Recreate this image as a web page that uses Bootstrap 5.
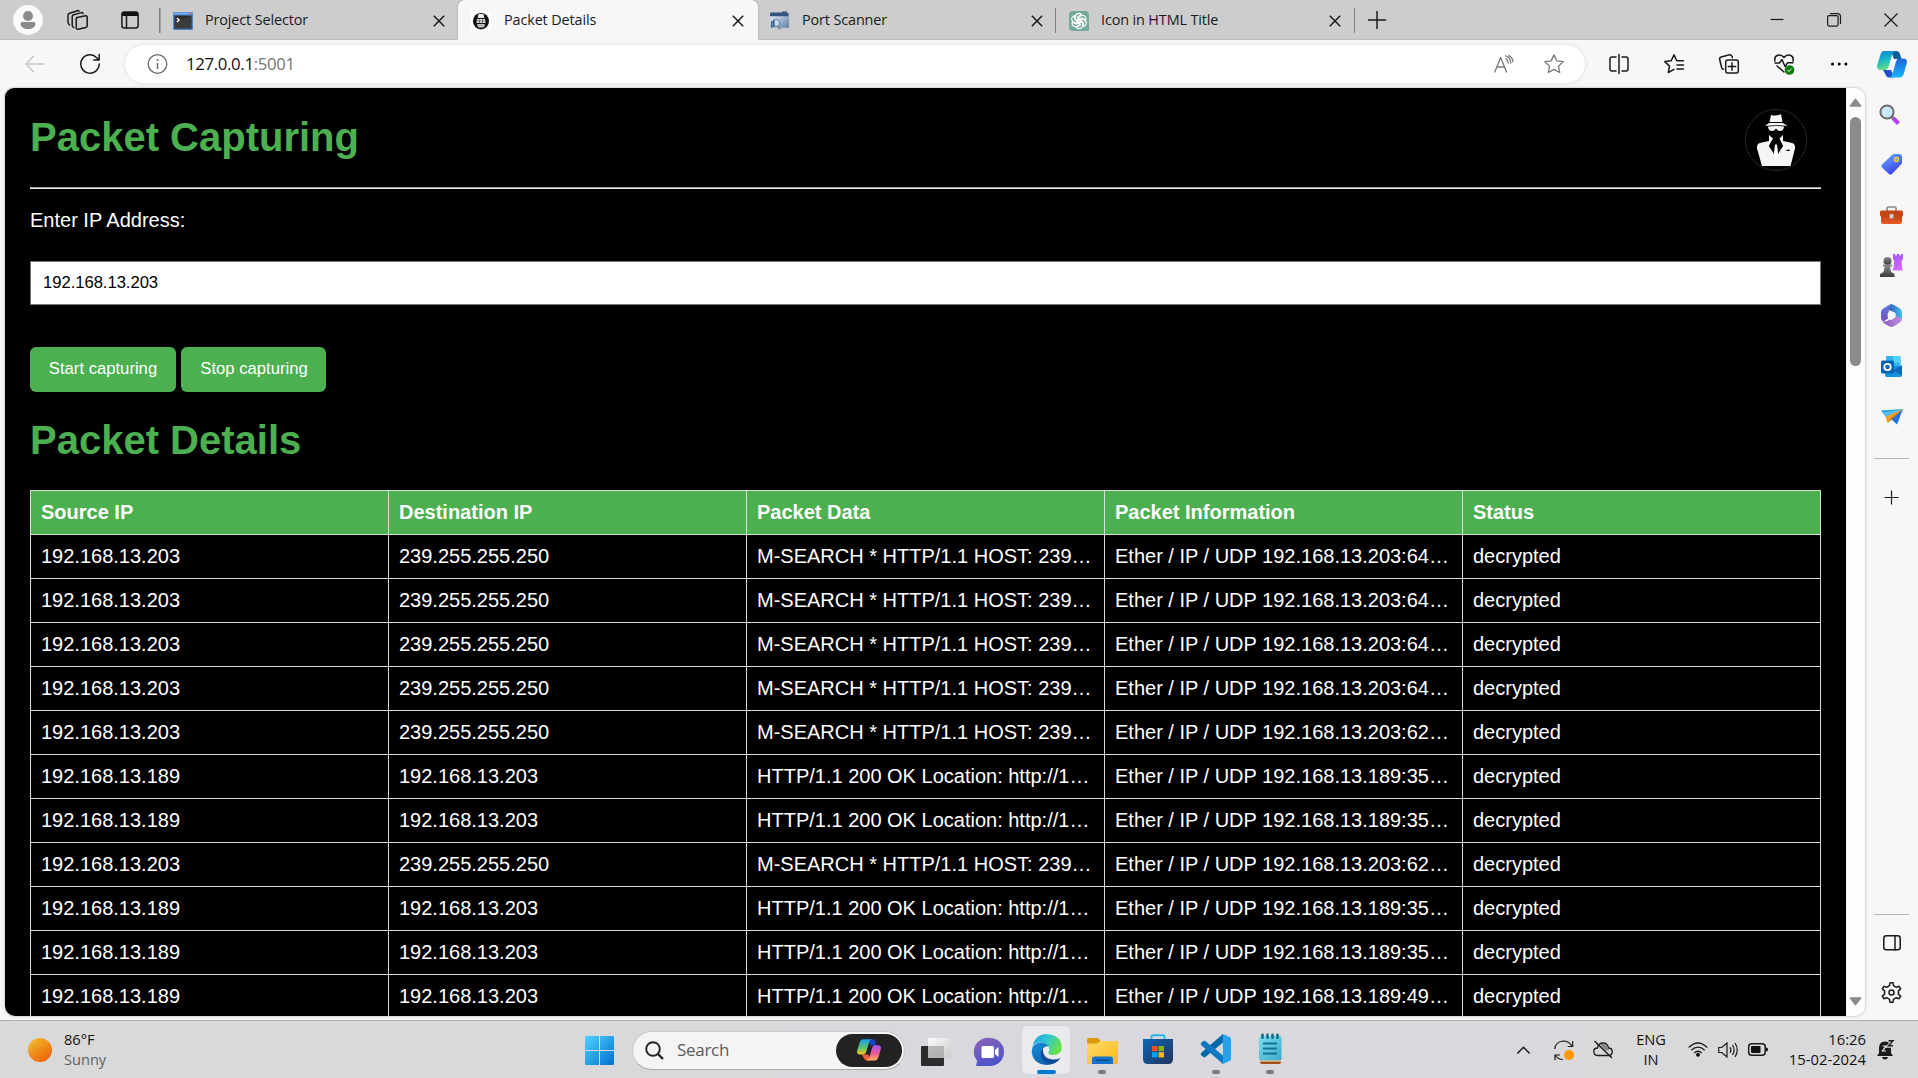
<!DOCTYPE html>
<html lang="en">
<head>
<meta charset="utf-8">
<title>Packet Details</title>
<link rel="stylesheet" href="https://cdn.jsdelivr.net/npm/bootstrap@5.3.0/dist/css/bootstrap.min.css">
<style>
  html, body { height: 100%; }
  body { width: 1918px; height: 1078px; overflow: hidden; background: #f7f7f7; font-family: "Open Sans", "Noto Sans", sans-serif; color: #111; line-height: 1.2; }
  svg { display: block; flex: none; overflow: visible; }
  .ln { fill: none; stroke: #1b1b1b; stroke-width: 1.5; stroke-linecap: round; stroke-linejoin: round; }
  .ln-thin { fill: none; stroke: #1b1b1b; stroke-width: 1.2; }
  .ln-grey { fill: none; stroke: #777; stroke-width: 1.3; stroke-linejoin: round; stroke-linecap: round; }

  /* tab strip */
  .tabstrip { height: 40px; background: #cdcdcd; box-shadow: inset 0 -1px 0 #bdbdbd; }
  .strip-tools { width: 159px; padding-left: 13px; }
  .strip-tools .tool-ws { margin-left: 24px; }
  .strip-tools .tool-ta { margin-left: 33px; }
  .avatar { width: 30px; height: 30px; background: #fafafa; }
  .tab-item { height: 40px; padding: 1px 14px 0 14px; font-size: 14.4px; letter-spacing: -.12px; color: #1a1a1a; }
  .tab-item .tab-name { margin-left: 12px; padding-bottom: 1px; }
  .w-first { width: 299px; } .w-active { width: 300px; } .w-third { width: 298px; } .w-last { width: 299px; }
  .tab-sep-left { background: linear-gradient(#808080, #808080) 0 8px / 1.5px 25px no-repeat; padding-right: 13px; }
  .tab-sep-right { background: linear-gradient(#808080, #808080) 100% 8px / 1.5px 25px no-repeat; }
  .tab-active { background: #f7f7f7; border-radius: 7px 7px 0 0; padding-left: 13px; box-shadow: 0 0 2px #999; clip-path: inset(0 -3px 0 -3px); }
  .tab-active .tab-name { margin-left: 13px; }
  .tab-third { padding-left: 12px; padding-right: 13px; }
  .tab-last { padding-left: 13px; }
  .tab-plus { margin-left: 13px; }
  .win-controls { padding-right: 20px; gap: 43px; }

  /* address bar */
  .toolbar-row { height: 48px; padding-left: 25px; }
  .icon-reload { margin-left: 35px; }
  .addr-pill { width: 1460px; height: 38px; margin-left: 24px; margin-bottom: 1px; background: #fff; border-radius: 19px; padding: 0 21px 0 22px; box-shadow: 0 0 4px rgba(0,0,0,.12); font-size: 16.8px; letter-spacing: -.35px; }
  .addr-url { margin-left: 18px; padding-top: 1px; }
  .addr-port { color: #757575; }
  .addr-star { margin-left: 30px; }
  .bar-slot { width: 55.2px; }
  .bar-slots { margin-left: 6px; }
  .bar-copilot { margin-left: 10.500px; }

  /* viewport frame */
  .main-row { height: 932px; padding-left: 5px; }
  .page-frame { width: 1860px; height: 928px; border-radius: 9px 10px 10px 10px; overflow: hidden; background: #fdfdfd; box-shadow: 0 0 3px rgba(0,0,0,.3); }
  .page-body { width: 1841px; height: 928px; flex: none; background: #000; color: #fff; overflow: hidden; padding: 0 25px; font-family: "Liberation Sans", Arial, sans-serif; font-size: 20px; line-height: 23px; }
  .page-head { height: 99px; padding: 21px 14px 0 0; }
  .page-title { font-size: 40px; line-height: 46px; font-weight: 700; color: #4caf50; margin: 0; }
  .page-head .page-title { padding-top: 5px; }
  .page-rule { height: 2px; background: linear-gradient(#9c9c9c 50%, #f1f1f1 50%); }
  .ip-label { margin-top: 20px; height: 23px; }
  .form-control.ip-field { margin-top: 29px; height: 44px; border: 1px solid #767676; border-radius: 0; padding: 0 12px 1px; font-size: 16.67px; letter-spacing: -.05px; color: #000; background: #fff; }
  .btn-capture { height: 45px; border-radius: 6px; background: #4caf50; color: #fff; font-size: 16.67px; line-height: 19px; padding: 0 0 2px; width: 146px; border: 0; }
  .btn-stop { width: 145px; padding-left: 1px; }
  .btn-line { margin-top: 42px; gap: 5px; }
  .details-title { margin-top: 25px; }
  .table.packets { width: 1791px; margin: 27px 0 0; table-layout: fixed; border-collapse: collapse; color: #fff; --bs-table-color: #fff; --bs-table-bg: #000; border-color: #ddd; }
  .table.packets th, .table.packets td { height: 44px; padding: 0 10px 1px; border: 1px solid #ddd; white-space: nowrap; overflow: hidden; vertical-align: middle; line-height: 23px; color: #fff; background: #000; }
  .table.packets th { background: #4caf50; }
  .scroll-col { width: 19px; padding: 10px 0; }
  .scroll-thumb { width: 11px; height: 249px; border-radius: 6px; background: #8b8b8b; margin-top: 10px; }

  /* sidebar */
  .side-rail { width: 53px; height: 932px; padding-top: 1.500px; }
  .rail-slot { height: 50.3px; width: 53px; flex: none; }
  .rail-line { width: 35px; height: 1px; background: #b5b5b5; flex: none; }
  .rail-end { margin-top: auto; }
  .rail-panel { margin-top: 2.500px; }
  .rail-gear { margin-bottom: 2px; }
  .rail-plus { margin-top: 31px; }

  /* taskbar */
  .taskbar { height: 58px; background: linear-gradient(90deg, #dad9d9, #d9d9da 25%, #d9d8de 60%, #d9d9da); border-top: 1px solid #adadad; font-size: 14.6px; line-height: 20px; padding-left: 28px; }
  .weather { width: 557px; gap: 12px; }
  .weather-text { padding-bottom: 2px; }
  .weather-state { color: #606060; }
  .search-pill { width: 273px; height: 39px; margin-left: 18px; margin-top: 1px; border-radius: 20px; background: #f4f4f5; border: 1px solid #c9c9cb; border-bottom-color: #aaa; padding: 0 2px 0 12px; font-size: 17px; letter-spacing: -.3px; color: #5c5c5c; }
  .search-word { margin-left: 13px; }
  .copilot-pill { width: 66px; height: 33px; border-radius: 17px; background: #222; }
  .start-logo { margin-top: 1px; }
  .task-slots { margin-left: 3px; }
  .task-slot { width: 56px; height: 57px; padding-top: 5px; }
  .task-tile { width: 48px; height: 48px; border-radius: 5px; background: #ebebee; box-shadow: 0 0 1px #bbb; }
  .task-mark { width: 8px; height: 4px; border-radius: 2px; background: #7b7b7d; }
  .task-mark-on { width: 19px; background: #0078d4; }
  .tray { padding-right: 24px; }
  .tray-sync { margin-left: 24px; } .tray-cloud { margin-left: 19px; }
  .tray-lang { width: 34px; margin-left: 21px; padding-bottom: 2px; } .tray-wifi { margin-left: 20px; }
  .tray-vol { margin-left: 10px; } .tray-batt { margin-left: 10px; }
  .tray-clock { width: 98px; padding-bottom: 2px; font-size: 14.8px; } .tray-bell { margin-left: 11px; }
</style>
<script src="https://cdn.jsdelivr.net/npm/bootstrap@5.3.0/dist/js/bootstrap.bundle.min.js"></script>
</head>
<body>
<svg width="0" height="0" class="position-absolute">
  <defs>
    <linearGradient id="gSun" x1="0" y1="0" x2=".7" y2="1"><stop offset="0" stop-color="#f0c52f"/><stop offset="1" stop-color="#ef6209"/></linearGradient>
    <linearGradient id="gWin" x1="0" y1="0" x2="1" y2="1"><stop offset="0" stop-color="#4fd3ff"/><stop offset="1" stop-color="#0070d0"/></linearGradient>
    <linearGradient id="gCpA" x1="0" y1="0" x2=".3" y2="1"><stop offset="0" stop-color="#0a7ad0"/><stop offset=".5" stop-color="#16b5c8"/><stop offset="1" stop-color="#5fe08a"/></linearGradient>
    <linearGradient id="gCpB" x1="0" y1="0" x2="0" y2="1"><stop offset="0" stop-color="#1f62d6"/><stop offset="1" stop-color="#16b7ff"/></linearGradient>
    <linearGradient id="gCpC" x1="0" y1="0" x2="0" y2="1"><stop offset="0" stop-color="#15a0f0"/><stop offset=".6" stop-color="#62c56a"/><stop offset="1" stop-color="#f5c518"/></linearGradient>
    <linearGradient id="gCpD" x1="0" y1="0" x2="0" y2="1"><stop offset="0" stop-color="#a353ee"/><stop offset=".55" stop-color="#f0569a"/><stop offset="1" stop-color="#ffb15a"/></linearGradient>
    <linearGradient id="gTag" x1="0" y1="0" x2=".5" y2="1"><stop offset="0" stop-color="#67b4ff"/><stop offset="1" stop-color="#3b41f0"/></linearGradient>
    <linearGradient id="gChat" x1="0" y1="0" x2=".4" y2="1"><stop offset="0" stop-color="#8e62b8"/><stop offset="1" stop-color="#4f55c9"/></linearGradient>
    <linearGradient id="gEdgeT" x1="0" y1="0" x2="1" y2=".4"><stop offset="0" stop-color="#1a9fe0"/><stop offset=".5" stop-color="#2fc6d6"/><stop offset="1" stop-color="#66e04b"/></linearGradient>
    <linearGradient id="gEdgeB" x1="0" y1="0" x2="1" y2="1"><stop offset="0" stop-color="#1b8fdc"/><stop offset="1" stop-color="#0b4fa0"/></linearGradient>
    <linearGradient id="gFold" x1="0" y1="0" x2="1" y2="1"><stop offset="0" stop-color="#ffda66"/><stop offset="1" stop-color="#fbb91e"/></linearGradient>
    <linearGradient id="gStore" x1="0" y1="0" x2="1" y2="1"><stop offset="0" stop-color="#0c66b5"/><stop offset="1" stop-color="#24335f"/></linearGradient>
    <linearGradient id="gNote" x1="0" y1="0" x2="1" y2="1"><stop offset="0" stop-color="#79def2"/><stop offset="1" stop-color="#3aaac8"/></linearGradient>
    <linearGradient id="gTv" x1="0" y1="0" x2="1" y2="1"><stop offset="0" stop-color="#fff"/><stop offset="1" stop-color="#c9c9cb"/></linearGradient>
    <linearGradient id="gScan" x1="0" y1="0" x2="1" y2="1"><stop offset="0" stop-color="#eef3f9"/><stop offset="1" stop-color="#5e7ea6"/></linearGradient>
    <linearGradient id="gM1" x1="0" y1="0" x2="1" y2="0"><stop offset="0" stop-color="#2f55b5"/><stop offset="1" stop-color="#46c2ee"/></linearGradient>
    <linearGradient id="gM2" x1="0" y1="0" x2="0" y2="1"><stop offset="0" stop-color="#5a7fe0"/><stop offset="1" stop-color="#7a4fb8"/></linearGradient>
    <linearGradient id="gM3" x1="0" y1="0" x2="1" y2="0"><stop offset="0" stop-color="#8c58bd"/><stop offset="1" stop-color="#c08fe0"/></linearGradient>
    <linearGradient id="gPawn" x1="0" y1="0" x2="0" y2="1"><stop offset="0" stop-color="#8a8a8a"/><stop offset="1" stop-color="#3d3d3d"/></linearGradient>
    <linearGradient id="gRook" x1="0" y1="0" x2="0" y2="1"><stop offset="0" stop-color="#a855f7"/><stop offset="1" stop-color="#d36bff"/></linearGradient>
    <linearGradient id="gTool" x1="0" y1="0" x2="0" y2="1"><stop offset="0" stop-color="#b53f14"/><stop offset="1" stop-color="#ee5a24"/></linearGradient>
    <symbol id="xmark" viewBox="0 0 12 12"><path d="M.8.8 11.2 11.2M11.2.8.8 11.2" fill="none" stroke="#1a1a1a" stroke-width="1.5"/></symbol>
  </defs>
</svg>

<header class="tabstrip d-flex align-items-center">
  <div class="strip-tools d-flex align-items-center">
    <div class="avatar rounded-circle d-flex align-items-center justify-content-center">
      <svg width="16" height="18" viewBox="0 0 16 18"><circle cx="8" cy="5" r="5" fill="#8b8b8b"/><path d="M2.5 11h11c1.600 0 2 1 2 2 0 3-3.500 5-7.500 5S.5 16 .5 13c0-1 .4-2 2-2z" fill="#8b8b8b"/></svg>
    </div>
    <svg class="tool-ws" width="21" height="20" viewBox="0 0 21 20"><g class="ln"><path d="m10 7.500 8.500-1.700q1.700-.2 1.700 1.500v8.500q0 1.300-1.300 1.600L11 19.300q-1.800.2-1.800-1.500V9q0-1.200.8-1.500z"/><path d="M16 3.500q-.4-1.200-1.600-.9L6.600 4.800Q5.200 5.300 5.200 6.700v8.500q0 1.700 1.500 2.300"/><path d="M12 1.200q-.5-.8-1.600-.5L2.600 3.200Q1 3.800 1 5.400v6.400q0 2 1.500 3"/></g></svg>
    <svg class="tool-ta" width="18" height="18" viewBox="0 0 18 18"><rect x=".9" y=".9" width="16.200" height="16.200" rx="2.500" class="ln"/><path d="M1 2.500Q1 1 3 1h12q2 0 2 1.500V5H1z" fill="#111"/><path d="M5.500 5v12" class="ln"/></svg>
  </div>
  <div class="tab-item tab-sep-left w-first d-flex align-items-center">
    <svg width="20" height="18" viewBox="0 0 20 18"><rect width="20" height="18" rx="1" fill="#4c83cd"/><rect x=".5" y=".5" width="19" height="2" fill="#79aaf0"/><rect x="16" y="1" width="2.500" height="1.300" fill="#e05848"/><rect x="1.500" y="3.500" width="17" height="13" fill="#2c2c2e"/><path d="M1.500 16.500v-9q9 0 17-4v13z" fill="#414143" opacity=".7"/><path d="m4 6 2 2-2 2" stroke="#fff" stroke-width="1.400" fill="none"/></svg>
    <span class="tab-name">Project Selector</span><svg class="ms-auto" width="12" height="12"><use href="#xmark"/></svg>
  </div>
  <div class="tab-item tab-active w-active d-flex align-items-center">
    <svg width="20" height="20" viewBox="0 0 20 20"><rect width="20" height="20" fill="#fff"/><ellipse cx="10" cy="10.200" rx="8" ry="8.300" fill="#111"/><path d="M7.500 3h5l.8 4H6.700z" fill="#eee"/><path d="M6 8h8l.6 4H5.400z" fill="#ddd"/><path d="M6 10h8M8.500 8v4M11.500 8v4" stroke="#555" stroke-width=".7"/><path d="M6 13h8l-1 3.500H7z" fill="#bbb"/></svg>
    <span class="tab-name">Packet Details</span><svg class="ms-auto" width="12" height="12"><use href="#xmark"/></svg>
  </div>
  <div class="tab-item tab-third tab-sep-right w-third d-flex align-items-center">
    <svg width="20" height="19" viewBox="0 0 21 19"><rect x="0" y="2" width="20" height="15" rx="1" fill="url(#gScan)"/><path d="M0 2.500Q0 1 1.500 1H12l1-1h5v2h1.500v3H0z" fill="#34557d"/><circle cx="6.500" cy="12" r="3.600" fill="#c5dcf3" stroke="#5e7ea6"/><path d="m8.500 15 2 4" stroke="#7d8da0" stroke-width="2"/><path d="M2 10v7M4 9v7" stroke="#345a88" stroke-width="1.500"/></svg>
    <span class="tab-name">Port Scanner</span><svg class="ms-auto" width="12" height="12"><use href="#xmark"/></svg>
  </div>
  <div class="tab-item tab-last tab-sep-right w-last d-flex align-items-center">
    <svg width="20" height="20" viewBox="0 0 20 20"><path d="M4 0h12q4 0 4 4v16H4q-4 0-4-4V4q0-4 4-4z" fill="#74aa9c"/><g fill="none" stroke="#fff" stroke-width="1" stroke-linejoin="round" transform="translate(-.9 -.9) scale(1.090)"><path id="knot" d="M10 7.700 6.800 9.500V5.800Q7 3 9.800 3q1.400 0 2.500 1L9 6v5.500"/><use href="#knot" transform="rotate(60 10 10)"/><use href="#knot" transform="rotate(120 10 10)"/><use href="#knot" transform="rotate(180 10 10)"/><use href="#knot" transform="rotate(240 10 10)"/><use href="#knot" transform="rotate(300 10 10)"/></g></svg>
    <span class="tab-name">Icon in HTML Title</span><svg class="ms-auto" width="12" height="12"><use href="#xmark"/></svg>
  </div>
  <svg class="tab-plus" width="18" height="18" viewBox="0 0 18 18"><path d="M9 .5v17M.5 9h17" class="ln"/></svg>
  <div class="win-controls ms-auto d-flex align-items-center">
    <svg width="14" height="14" viewBox="0 0 14 14"><path d="M.5 6.500h13" class="ln-thin"/></svg>
    <svg width="14" height="14" viewBox="0 0 14 14"><rect x=".6" y="2.600" width="10.500" height="10.500" rx="1.500" class="ln-thin"/><path d="M3 .7h7.500q3 0 3 3V11" class="ln-thin"/></svg>
    <svg width="14" height="14" viewBox="0 0 14 14"><path d="M.5.5l13 13M13.500.5.5 13.500" class="ln-thin"/></svg>
  </div>
</header>

<nav class="toolbar-row d-flex align-items-center">
  <svg width="20" height="18" viewBox="0 0 20 18"><path d="M9 .8.9 9 9 17.200M1 9h18.500" fill="none" stroke="#c6c6c6" stroke-width="1.400"/></svg>
  <svg class="icon-reload" width="21" height="20" viewBox="0 0 21 20"><path d="M19.200 10a9.200 9.200 0 1 1-2.500-6.300L19 6M19.200.6V6h-5.500" class="ln"/></svg>
  <div class="addr-pill d-flex align-items-center">
    <svg width="21" height="20" viewBox="0 0 21 20"><circle cx="10.500" cy="10" r="9.300" fill="none" stroke="#6a6a6a" stroke-width="1.300"/><path d="M10.500 9v6" stroke="#6a6a6a" stroke-width="1.500"/><circle cx="10.500" cy="6" r="1" fill="#6a6a6a"/></svg>
    <div class="addr-url">127.0.0.1<span class="addr-port">:5001</span></div>
    <svg class="ms-auto" width="20" height="18" viewBox="0 0 20 18"><path d="M.8 17 6.700 2.500 12.500 17M3 12h7.500M12 3.500q2 1.500 2.200 4.500M11.500.8q4.800 1 5.300 7.200M15 .6q3.500 1.900 4 6" class="ln-grey"/></svg>
    <svg class="addr-star" width="20" height="20" viewBox="0 0 20 20"><path d="m10 .9 2.800 5.900 6.400.8-4.700 4.500 1.200 6.400L10 15.400l-5.700 3.100 1.200-6.400L.8 7.600l6.400-.8z" class="ln-grey"/></svg>
  </div>
  <div class="bar-slots d-flex align-items-center">
    <div class="bar-slot d-flex justify-content-center"><svg width="20" height="20" viewBox="0 0 20 20"><path d="M7 3H3Q1 3 1 5v10q0 2 2 2h4M10 .5v19M13 3h4q2 0 2 2v10q0 2-2 2h-4" class="ln"/></svg></div>
    <div class="bar-slot d-flex justify-content-center"><svg width="20" height="20" viewBox="0 0 20 20"><path d="m10 15.400-5.700 3.100 1.200-6.400L.8 7.600l6.400-.8L10 .9l2.800 5.900h6.700M13 10.900h6.500M13 15h6.500" class="ln"/></svg></div>
    <div class="bar-slot d-flex justify-content-center"><svg width="20" height="20" viewBox="0 0 20 20"><path d="M4.500 15.300Q3 15 2.600 13.500L.7 5.500Q.3 3.500 2.200 3L10.500.8q2-.4 2.700 2l.2.900M8.700 6h8.600q2 0 2 2v9q0 2-2 2H8.700q-2 0-2-2V8q0-2 2-2zM13 8.800v7.400M9.300 12.500h7.400" class="ln"/></svg></div>
    <div class="bar-slot d-flex justify-content-center"><svg width="20" height="20" viewBox="0 0 20 20"><path d="M1 7Q-.1 2.500 3.800 1.200 7.500.3 10 3.500 12.500.3 16.200 1.200 20 2.500 19 7M1 9h4.500L8 5.500l3 7 2.500-3.700h5.500M3 12l7 6" class="ln"/><circle cx="15.500" cy="16" r="4.800" fill="#107c10"/><path d="m13.400 16 1.500 1.500 2.700-2.800" stroke="#fff" fill="none"/></svg></div>
    <div class="bar-slot d-flex justify-content-center"><svg width="18" height="4" viewBox="0 0 18 4"><circle cx="2.500" cy="2" r="1.500"/><circle cx="9.200" cy="2" r="1.500"/><circle cx="15.900" cy="2" r="1.500"/></svg></div>
  </div>
  <svg class="bar-copilot" width="30" height="27" viewBox="0 0 30 27"><path d="M14 0h5q3 0 4 3l1.500 5H17z" fill="#0d5f9c"/><path d="M6 19h8l3.500 7.500H12q-2.500 0-3.500-3z" fill="#1f4fd0"/><path d="M7.500 0H18.500q-2.500.5-3.500 4l-3.500 12Q10.500 19 8 19H4q-5 0-3.700-5L3.500 3.500Q4.500 0 7.500 0z" fill="url(#gCpA)"/><path d="M22.500 26.500H12q2.500-.5 3.500-4L19 10.500Q20 7.500 22 7.500h4q5 0 3.700 5l-3 10.500q-1.200 3.500-4.200 3.500z" fill="url(#gCpB)"/></svg>
</nav>

<div class="main-row d-flex">
  <main class="page-frame d-flex">
    <div class="page-body">
      <div class="page-head d-flex justify-content-between align-items-start">
        <h1 class="page-title">Packet Capturing</h1>
        <svg width="62" height="62" viewBox="0 0 62 62"><circle cx="31" cy="31" r="30.600" fill="#000" stroke="#333" stroke-width=".8"/><path d="M26 6q5 1.500 10-1l1.500 8h-13z" fill="#f5f5f5"/><path d="M24 14h14l4.500 3Q31 15.500 20 17z" fill="#f5f5f5"/><path d="M23 17.500q8-1 16 0l-.5 2.500q-1 2-3.500 2t-4-2.500q-1.500 2.500-4 2.500t-3.500-2z" fill="#f5f5f5"/><path d="m24 26 4 3.500L24 37l6.500 9 .5-12 .5 12L38 37l-3.500-7.500L38 26v6l9 2q3.500 1 3 5.500L45.500 57H17L12 39.500Q11.500 35 15 34l9-2z" fill="#f5f5f5"/><path d="M27.500 30.500 31 34l3.500-3.500L37.800 37 33 45l-1-9h-2l-1 9-5-8z"/><path d="M30 35.500h2l1 8-2 10-2-10z" fill="#fff"/><path d="m40 42 4-1.800 1 1.800z"/></svg>
      </div>
      <div class="page-rule"></div>
      <div class="ip-label">Enter IP Address:</div>
      <input class="form-control ip-field" type="text" value="192.168.13.203">
      <div class="btn-line d-flex"><button class="btn btn-capture">Start capturing</button><button class="btn btn-capture btn-stop">Stop capturing</button></div>
      <h1 class="page-title details-title">Packet Details</h1>
      <table class="table packets">
        <thead><tr><th>Source IP</th><th>Destination IP</th><th>Packet Data</th><th>Packet Information</th><th>Status</th></tr></thead>
        <tbody id="packetRows"></tbody>
      </table>
    </div>
    <div class="scroll-col d-flex flex-column align-items-center">
      <svg width="13" height="9" viewBox="0 0 13 9"><path d="M6.500.8 12.200 8.200H.8z" fill="#8b8b8b" stroke="#8b8b8b" stroke-linejoin="round"/></svg>
      <div class="scroll-thumb"></div>
      <svg class="mt-auto" width="13" height="9" viewBox="0 0 13 9"><path d="M6.500 8.200 12.200.8H.8z" fill="#8b8b8b" stroke="#8b8b8b" stroke-linejoin="round"/></svg>
    </div>
  </main>
  <aside class="side-rail d-flex flex-column align-items-center">
    <div class="rail-slot d-flex align-items-center justify-content-center pe-1"><svg width="21" height="21" viewBox="0 0 21 21"><path d="m14 14 5.500 5.500" stroke="#b13ff5" stroke-width="4"/><path d="m12.500 12.500 2 2" stroke="#777" stroke-width="2.500"/><circle cx="8" cy="8" r="6.600" fill="#c9e8fb" stroke="#6a6a6a" stroke-width="2"/></svg></div>
    <div class="rail-slot d-flex align-items-center justify-content-center"><svg width="21" height="21" viewBox="0 0 21 21"><path d="M11 1q1-1 2.500-1H18q3 0 3 3v5q0 1.500-1 2.500l-9 9.500q-1.500 1.500-3 0L1 13.500q-1.500-1.500 0-3z" fill="url(#gTag)"/><circle cx="15.500" cy="5.500" r="2" fill="#7aa" stroke="#fbc926" stroke-width="1.500"/></svg></div>
    <div class="rail-slot d-flex align-items-center justify-content-center"><svg width="23" height="18" viewBox="0 0 23 18"><path d="M7 5V2.500Q7 1 8.500 1h6Q16 1 16 2.500V5" fill="none" stroke="#8b8b8b" stroke-width="1.700"/><path d="M1 8h21v8q0 2-2 2H3q-2 0-2-2z" fill="url(#gTool)"/><rect y="4.500" width="23" height="6" rx="1.500" fill="#c44617"/><rect x="9.500" y="8" width="4" height="4.500" rx="1" fill="#ccc"/></svg></div>
    <div class="rail-slot d-flex align-items-center justify-content-center"><svg width="23" height="23" viewBox="0 0 23 23"><path d="M13 0h2.200v1.500h1.600V0h2.600v1.500H21V0h2v5.500l-1.500 1 .5 7 1 3H12.500l1-3 .7-7-1.200-1z" fill="url(#gRook)"/><circle cx="7.500" cy="7" r="4" fill="url(#gPawn)"/><path d="M3 10.500h9v2H10l1 5.500 3.500 2V23H0v-3l3.500-2 1.200-5.500H3z" fill="url(#gPawn)"/></svg></div>
    <div class="rail-slot d-flex align-items-center justify-content-center"><svg width="21" height="23" viewBox="0 0 21 23"><path d="M8 1q2.500-1.500 5 0l6 3.500Q21 6 21 8v7.500L14.500 12V9L7 5.500z" fill="url(#gM1)"/><path d="M8 1q1.500-1 3-1Q7.500 3 8 7.500L7 9v5.500l-4.500 3Q0 16 0 14V8q0-2 2-3.300z" fill="url(#gM2)"/><path d="M1.500 17q4 1.500 7-1.500l2 .5 4-3v-1L21 14.500q0 2.500-2 3.700l-6 4q-2.500 1.500-5 0l-5-3q-1.200-1-1.500-2.200z" fill="url(#gM3)"/><path d="m10.500 7.300 3.800 2.100v4.200l-3.800 2.200-3.800-2.200V9.400z" fill="#f7f7f7"/></svg></div>
    <div class="rail-slot d-flex align-items-center justify-content-center"><svg width="21" height="21" viewBox="0 0 21 21"><rect x="5" width="14.500" height="14" rx="1" fill="#31b5ee"/><path d="M12 0h7.500v7H12z" fill="#50d0fa"/><path d="M4 10h17v9q0 2-2 2H6q-2 0-2-2z" fill="#1490df"/><path d="m21 9-9 5.500 9 5z" fill="#0a6ab8"/><rect y="4.500" width="13" height="13" rx="1.500" fill="#0a64b4"/><circle cx="6.500" cy="11" r="3.200" fill="none" stroke="#fff" stroke-width="1.800"/></svg></div>
    <div class="rail-slot d-flex align-items-center justify-content-center"><svg width="22" height="17" viewBox="0 0 22 17"><path d="M22 1 0 2.500 5 9z" fill="#2a9de8"/><path d="M22 1 4.500 8.500 6.500 15z" fill="#f0a11d"/><path d="m22 1-12 10 6 5.500z" fill="#2672dc"/><path d="m22 1-12 9-3.500 5 3-2.500z" fill="#c57a0a"/><path d="M22 1 2 4.500l2.500 4z" fill="#4fc3fa"/></svg></div>
    <div class="rail-line mt-3"></div>
    <svg class="rail-plus" width="15" height="15" viewBox="0 0 15 15"><path d="M7.500.5v14M.5 7.500h14" class="ln-thin"/></svg>
    <div class="rail-end rail-line"></div>
    <div class="rail-slot rail-panel d-flex align-items-center justify-content-center"><svg width="18" height="16" viewBox="0 0 18 16"><rect x=".8" y=".8" width="16.400" height="14" rx="2.500" class="ln"/><path d="M12 1v14" class="ln"/></svg></div>
    <div class="rail-slot rail-gear d-flex align-items-center justify-content-center"><svg width="21" height="21" viewBox="-10.500 -10.500 21 21"><path d="M-2-6.800-1.500-9.700H1.500L2-6.800 4.800-5.200 7.600-6.200 9.200-3.600 6.900-1.700V1.700L9.200 3.600 7.600 6.200 4.800 5.200 2 6.800 1.500 9.700H-1.500L-2 6.800-4.800 5.200-7.600 6.200-9.200 3.600-6.900 1.700V-1.700L-9.200-3.600-7.600-6.200-4.800-5.200z" class="ln"/><circle r="2.500" class="ln"/></svg></div>
  </aside>
</div>

<footer class="taskbar d-flex align-items-center">
  <div class="weather d-flex align-items-center">
    <svg width="24" height="24"><circle cx="12" cy="12" r="12" fill="url(#gSun)"/></svg>
    <div class="weather-text"><div>86°F</div><div class="weather-state">Sunny</div></div>
  </div>
  <svg class="start-logo" width="29" height="29" viewBox="0 0 29 29"><path d="M1 0h13v14H0V1q0-1 1-1zM15 0h13q1 0 1 1v13H15zM0 15h14v14H1q-1 0-1-1zM15 15h14v13q0 1-1 1H15z" fill="url(#gWin)"/></svg>
  <div class="search-pill d-flex align-items-center">
    <svg width="19" height="19" viewBox="0 0 19 19"><circle cx="8" cy="8" r="6.800" fill="none" stroke="#222" stroke-width="1.900"/><path d="m13 13 5 5" stroke="#222" stroke-width="2.400"/></svg>
    <span class="search-word">Search</span>
    <div class="copilot-pill ms-auto d-flex align-items-center justify-content-center">
      <svg width="24" height="22" viewBox="0 0 30 27"><path d="M14 0h5q3 0 4 3l1.500 5H17z" fill="#1d3fc4"/><path d="M6 19h8l3.500 7.500H12q-2.500 0-3.500-3z" fill="#f0603a"/><path d="M7.500 0H18.500q-2.500.5-3.500 4l-3.500 12Q10.500 19 8 19H4q-5 0-3.700-5L3.500 3.500Q4.500 0 7.500 0z" fill="url(#gCpC)"/><path d="M22.500 26.500H12q2.500-.5 3.500-4L19 10.500Q20 7.500 22 7.500h4q5 0 3.700 5l-3 10.500q-1.200 3.500-4.200 3.500z" fill="url(#gCpD)"/></svg>
    </div>
  </div>
  <div class="task-slots d-flex">
    <div class="task-slot"><div class="d-flex justify-content-center pt-2 mt-1"><svg width="30" height="28" viewBox="0 0 30 28"><rect y="8" width="23" height="20" rx="1" fill="#2c2c2b"/><rect x="7" width="23" height="20" rx="1" fill="url(#gTv)" opacity=".9"/><path d="M7 8h16v12H7z" fill="#aaa" opacity=".7"/></svg></div></div>
    <div class="task-slot"><div class="d-flex justify-content-center pt-2 mt-1 pe-1"><svg width="30" height="28" viewBox="0 0 29 28"><path d="M14.500 0a14 14 0 1 1 0 28H.5l1.200-5A14 14 0 0 1 14.500 0z" fill="url(#gChat)"/><rect x="6" y="8" width="12.500" height="12" rx="1.500" fill="#fff"/><path d="m19.500 12 3.500-3v10l-3.500-3z" fill="#fff"/></svg></div></div>
    <div class="task-slot d-flex flex-column align-items-center"><div class="task-tile d-flex flex-column align-items-center justify-content-between me-1"><svg class="pt-2" width="31" height="39" viewBox="0 0 31 31"><path d="M1.500 12Q4.500 0 16 0 30 1 30.800 13q0 8-9 8-5 0-4.500-3 2-2 .5-5-3-5-9-4.500-5 0-7.300 3.500z" fill="url(#gEdgeT)"/><path d="M.7 17Q.5 9 10.500 8.500q5 .5 7.300 4-3-1-5.300 1.500-2.500 3-.5 7.500 3 5.500 10 5.500 4 0 7.500-3Q25 31 15.500 31 1.500 30 .7 17z" fill="url(#gEdgeB)"/><path d="M12 14q-4.500 6.500 0 12 4 5 11 3 4-2 6-5-4 2-8 1.500-8.500-1.500-9-8z" fill="#0c4b96"/></svg><div class="task-mark task-mark-on"></div></div></div>
    <div class="task-slot d-flex flex-column align-items-center pe-1"><svg class="mt-2 pt-1" width="31" height="30" viewBox="0 0 31 26"><path d="M0 2Q0 0 2 0h8q1 0 2 1l1.500 2H29q2 0 2 2v19q0 2-2 2H2q-2 0-2-2z" fill="#dc9a0b"/><path d="M0 5.500h10L13.500 3H29q2 0 2 2v19q0 2-2 2H2q-2 0-2-2z" fill="url(#gFold)"/><path d="M5 26v-5q0-2.500 2.500-2.500h16Q26 18.500 26 21v5z" fill="#1572c4"/><path d="M9 22.300h13" stroke="#0a4a8c" stroke-width="1.400"/></svg><div class="task-mark mt-auto mb-1"></div></div>
    <div class="task-slot"><div class="d-flex justify-content-center pt-2 pe-1"><svg width="30" height="30" viewBox="0 0 30 30"><path d="M8.500 7V3Q8.500 1.200 10 1.200h10q1.500 0 1.500 1.800V7" fill="none" stroke="#28b6f2" stroke-width="2"/><path d="M0 5h30v20q0 5-5 5H5q-5 0-5-5z" fill="url(#gStore)"/><path d="M9 12h5.500v5.200H9z" fill="#f25022"/><path d="M15.500 12H21v5.200h-5.500z" fill="#7fba00"/><path d="M9 18.200h5.500v5.200H9z" fill="#00a4ef"/><path d="M15.500 18.200H21v5.200h-5.500z" fill="#ffb900"/></svg></div></div>
    <div class="task-slot d-flex flex-column align-items-center"><svg class="mt-1 pt-1" width="30" height="34" viewBox="0 0 30 30"><path d="M0 19q-.8 1.200.3 2.200l2 1.800q1 .6 2 0L22 8.500V0z" fill="#0069ac"/><path d="M0 11q-.8-1.200.3-2.200L2.300 7q1-.6 2 0L22 21.500V30z" fill="#1079c0"/><path d="M22 0l7 3.200q1 .5 1 1.800v20q0 1.300-1 1.800L22 30q-1-1-.1-2.500v-25Q21.500 1 22 0z" fill="#28a2ee"/></svg><div class="task-mark mt-auto mb-1"></div></div>
    <div class="task-slot d-flex flex-column align-items-center pe-1"><svg class="mt-1 pt-1" width="23" height="34" viewBox="0 0 23 30"><path d="M1 25h21v3q0 2-2 2H3q-2 0-2-2z" fill="#a04f12"/><rect y="2" width="22.500" height="24.500" rx="2" fill="url(#gNote)"/><path d="M3.500.8v3M8.500.8v3M13.500.8v3M18.500.8v3" stroke="#176b86" stroke-width="2.600" stroke-linecap="round"/><path d="M4 9.500h14M4 14.500h14M4 19.500h14" stroke="#13738f" stroke-width="1.800"/><path d="M0 26.500h23v1H0z" fill="#f8f2e8"/></svg><div class="task-mark mt-auto mb-1"></div></div>
  </div>
  <div class="tray d-flex align-items-center ms-auto">
    <svg width="13" height="8" viewBox="0 0 13 8"><path d="M.8 7 6.500 1.200 12.200 7" class="ln"/></svg>
    <svg class="tray-sync" width="20" height="20" viewBox="0 0 20 20"><path d="M.7 9Q1.500 2 9 1q6 0 9 5M18.700 1v5.500h-5M6 15H1v5M1.500 15.500Q4 19.500 9 19.500" class="ln-thin"/><circle cx="15" cy="15" r="5" fill="#ff9800"/></svg>
    <svg class="tray-cloud" width="20" height="17" viewBox="0 0 20 17"><path d="M4.500 14.500Q.8 14 .8 10.500T4.500 7Q5.500 2 10 2t5.500 5q3.700 0 3.700 3.700t-3.700 3.800z" fill="#d7d7da" stroke="#1b1b1b" stroke-width="1.300"/><path d="M7 3.500Q12 1 15 7l1 3-4-1z" fill="#8a8a8c"/><path d="m2 .5 16.500 16" class="ln"/></svg>
    <div class="tray-lang text-center"><div>ENG</div><div>IN</div></div>
    <svg class="tray-wifi" width="20" height="15" viewBox="0 0 20 15"><path d="M.7 5.500Q10-3.500 19.300 5.500M3.300 8.300q6.700-6.500 13.400 0M6.200 11q3.800-3.500 7.600 0" class="ln-thin"/><circle cx="10" cy="12.800" r="1.900"/></svg>
    <svg class="tray-vol" width="20" height="16" viewBox="0 0 20 16"><path d="M.7 5.500h3L9 1v14l-5.300-4.500h-3zM12 5.200q1.800 2.800 0 5.600M14.500 3q3.200 5 0 10M17 1q4.500 7 0 14" class="ln-thin"/></svg>
    <svg class="tray-batt" width="20" height="13" viewBox="0 0 20 13"><rect x=".7" y=".7" width="16.500" height="11.600" rx="3" class="ln"/><rect x="3" y="3" width="9.500" height="7" rx="1" fill="#111"/><path d="M18 4.500q2 0 2 2t-2 2z"/></svg>
    <div class="tray-clock text-end"><div>16:26</div><div>15-02-2024</div></div>
    <svg class="tray-bell" width="17" height="20" viewBox="0 0 17 20"><path d="M8 1.500q6 0 6 6.500v5l2 3H0l2-3V8q0-6.500 6-6.500zM5 17h6q-.5 2.500-3 2.500T5 17z" fill="#1b1b1b"/><path d="M5.500 6h3.500l-3.500 5H9" fill="none" stroke="#eee" stroke-width="1.200"/><path d="M11 .8h5l-5 5.500h5" fill="none" stroke="#dadadb" stroke-width="3"/><path d="M11.500.8h4.500l-4.500 5H16" fill="none" stroke="#1b1b1b" stroke-width="1.400"/></svg>
  </div>
</footer>
<script>
  const search = 'M-SEARCH * HTTP/1.1 HOST: 239…', ok = 'HTTP/1.1 200 OK Location: http://1…';
  const packets = [[203, '64'], [203, '64'], [203, '64'], [203, '64'], [203, '62'], [189, '35'], [189, '35'], [203, '62'], [189, '35'], [189, '35'], [189, '49']];
  document.getElementById('packetRows').innerHTML = packets.map(([host, port]) =>
    `<tr><td>192.168.13.${host}</td><td>${host === 203 ? '239.255.255.250' : '192.168.13.203'}</td><td>${host === 203 ? search : ok}</td><td>Ether / IP / UDP 192.168.13.${host}:${port}…</td><td>decrypted</td></tr>`).join('');
</script>
</body>
</html>
